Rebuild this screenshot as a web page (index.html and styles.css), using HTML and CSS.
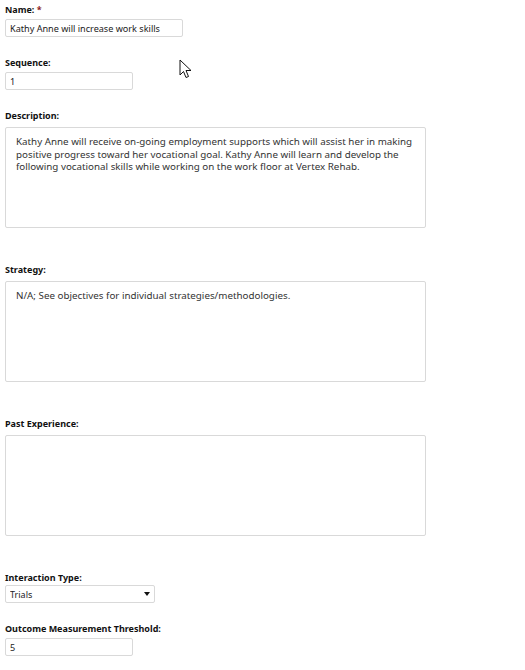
FILE: index.html
```html
<!DOCTYPE html>
<html>
<head>
<meta charset="utf-8">
<link rel="stylesheet" href="styles.css">
</head>
<body>
<form class="form">
  <div class="field">
    <label class="label">Name: <span class="req">*</span></label>
    <input class="input input-name" type="text" value="Kathy Anne will increase work skills">
  </div>
  <div class="field">
    <label class="label">Sequence:</label>
    <input class="input input-short" type="text" value="1">
  </div>
  <div class="field field-area">
    <label class="label">Description:</label>
    <textarea class="area">Kathy Anne will receive on-going employment supports which will assist her in making positive progress toward her vocational goal. Kathy Anne will learn and develop the following vocational skills while working on the work floor at Vertex Rehab.</textarea>
  </div>
  <div class="field field-area">
    <label class="label">Strategy:</label>
    <textarea class="area">N/A; See objectives for individual strategies/methodologies.</textarea>
  </div>
  <div class="field field-area">
    <label class="label">Past Experience:</label>
    <textarea class="area"></textarea>
  </div>
  <div class="field field-select">
    <label class="label">Interaction Type:</label>
    <div class="select-wrap">
      <select class="select"><option>Trials</option></select>
    </div>
  </div>
  <div class="field">
    <label class="label">Outcome Measurement Threshold:</label>
    <input class="input input-short" type="text" value="5">
  </div>
</form>
<svg class="cursor" width="14" height="20" viewBox="0 0 14 20">
  <path d="M1 1 L1 16 L4.5 12.5 L7 18.5 L9.5 17.5 L7 11.5 L12 11.5 Z" fill="#fff" stroke="#111" stroke-width="1" stroke-linejoin="miter"/>
</svg>
</body>
</html>
```
FILE: styles.css
```css
html, body {
  margin: 0;
  padding: 0;
  background: #fff;
}
body {
  font-family: "Noto Sans", "Open Sans", sans-serif;
  font-size: 9px;
  color: #222;
  position: relative;
}
.form {
  padding: 4px 5px 0 5px;
  display: flex;
  flex-direction: column;
}
.field {
  display: flex;
  flex-direction: column;
  align-items: flex-start;
  margin-bottom: 20px;
}
.field-area {
  margin-bottom: 36px;
}
.label {
  font-weight: bold;
  font-size: 9px;
  line-height: 12px;
  height: 12px;
  color: #111;
  margin-bottom: 3px;
}
.field-area .label {
  margin-bottom: 5px;
}
.field-select .label {
  margin-bottom: 1px;
}
.req {
  color: #8b1a1a;
}
.input, .select, .area {
  font-family: "Noto Sans", "Open Sans", sans-serif;
  font-size: 9px;
  color: #222;
  border: 1px solid #d9d9d9;
  border-radius: 2px;
  background: #fff;
  box-sizing: border-box;
  margin: 0;
  outline: none;
}
.input {
  height: 18px;
  padding: 0 4px;
  font-size: 9.1px;
}
.input-name {
  width: 178px;
}
.input-short {
  width: 128px;
}
.area {
  width: 421px;
  height: 101px;
  padding: 8px 10px;
  font-size: 9.8px;
  line-height: 12.5px;
  resize: none;
  overflow: hidden;
  color: #333;
}
.select-wrap {
  position: relative;
  width: 150px;
  height: 18px;
}
.select {
  width: 150px;
  height: 18px;
  padding: 0 4px;
  appearance: none;
  -webkit-appearance: none;
}
.select-wrap::after {
  content: "";
  position: absolute;
  right: 5px;
  top: 7px;
  border-left: 3.5px solid transparent;
  border-right: 3.5px solid transparent;
  border-top: 4px solid #111;
  pointer-events: none;
}
.cursor {
  position: absolute;
  left: 179px;
  top: 59px;
}
```
